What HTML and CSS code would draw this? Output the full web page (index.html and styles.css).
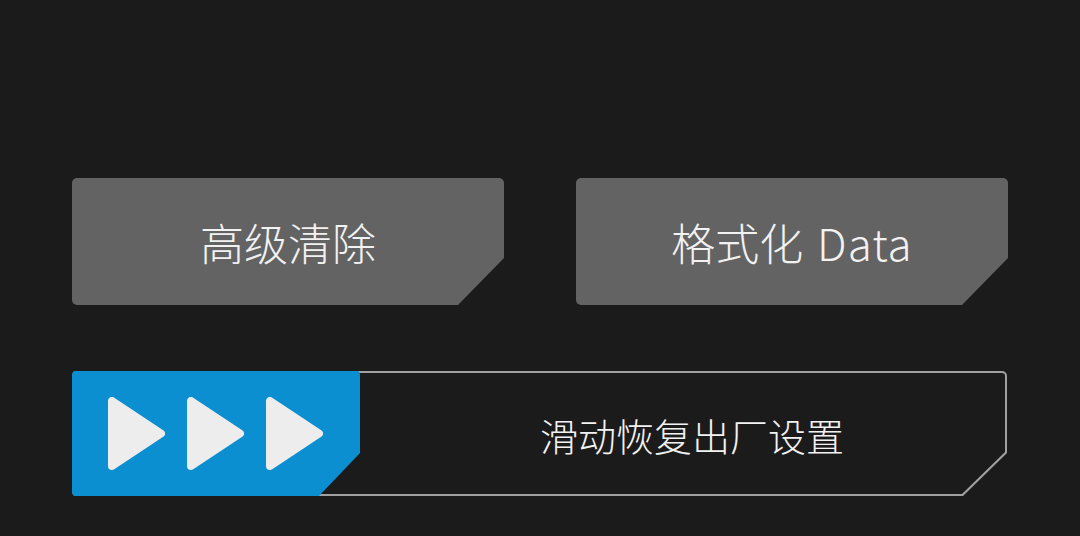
FILE: index.html
```html
<!DOCTYPE html>
<html lang="zh-CN">
<head>
<meta charset="utf-8">
<title>Reset</title>
<link rel="stylesheet" href="styles.css">
</head>
<body>
<main class="screen">
  <div class="actions">
    <button class="action">高级清除</button>
    <button class="action">格式化 <span class="latin">Data</span></button>
  </div>
  <div class="track">
    <div class="track-inner">
      <span class="track-label">滑动恢复出厂设置</span>
    </div>
    <div class="knob">
      <svg class="arrow" viewBox="0 0 57 73" width="57" height="73"><polygon points="4,4 4,69 53,36.5"/></svg>
      <svg class="arrow" viewBox="0 0 57 73" width="57" height="73"><polygon points="4,4 4,69 53,36.5"/></svg>
      <svg class="arrow" viewBox="0 0 57 73" width="57" height="73"><polygon points="4,4 4,69 53,36.5"/></svg>
    </div>
  </div>
</main>
</body>
</html>
```

FILE: styles.css
```css
html, body {
  margin: 0;
  padding: 0;
  background: #1c1b1b;
}
body {
  width: 1080px;
  height: 536px;
  overflow: hidden;
  font-family: "Noto Sans CJK SC", "Noto Sans", sans-serif;
}
.screen {
  padding: 178px 72px 0 72px;
  display: flex;
  flex-direction: column;
  gap: 66px;
}
.actions {
  display: flex;
  gap: 72px;
}
.action {
  width: 432px;
  height: 127px;
  border: none;
  margin: 0;
  padding: 1px 0 0 0;
  background: #646363;
  color: #f2f2f2;
  font-family: "Noto Sans CJK SC", "Noto Sans", sans-serif;
  font-weight: 300;
  font-size: 44px;
  line-height: 1;
  white-space: pre;
  border-radius: 5px;
  clip-path: polygon(0 0, 100% 0, 100% calc(100% - 47px), calc(100% - 46px) 100%, 0 100%);
  display: flex;
  align-items: center;
  justify-content: center;
}
.latin {
  letter-spacing: 1px;
  margin-left: 4px;
}
.track {
  position: relative;
  width: 935px;
  height: 125px;
  background: #a0a0a0;
  border-radius: 5px;
  clip-path: polygon(0 0, 100% 0, 100% calc(100% - 43px), calc(100% - 44px) 100%, 0 100%);
  padding: 2px;
  box-sizing: border-box;
}
.track-inner {
  height: 100%;
  background: #1c1b1b;
  border-radius: 3px;
  clip-path: polygon(0 0, 100% 0, 100% calc(100% - 42px), calc(100% - 43px) 100%, 0 100%);
  display: flex;
  align-items: center;
  padding: 3px 0 0 466px;
  box-sizing: border-box;
}
.track-label {
  color: #f2f2f2;
  font-size: 38px;
  font-weight: 300;
  line-height: 1;
}
.knob {
  position: absolute;
  left: 0;
  top: -1px;
  bottom: -1px;
  width: 288px;
  background: #0b8fd0;
  border-radius: 5px;
  clip-path: polygon(0 0, 100% 0, 100% calc(100% - 44px), calc(100% - 42px) 100%, 0 100%);
  display: flex;
  align-items: center;
  padding-left: 36px;
  gap: 22px;
  box-sizing: border-box;
}
.arrow {
  display: block;
  flex: none;
}
.arrow polygon {
  fill: #eeeded;
  stroke: #eeeded;
  stroke-width: 8;
  stroke-linejoin: round;
}
```
